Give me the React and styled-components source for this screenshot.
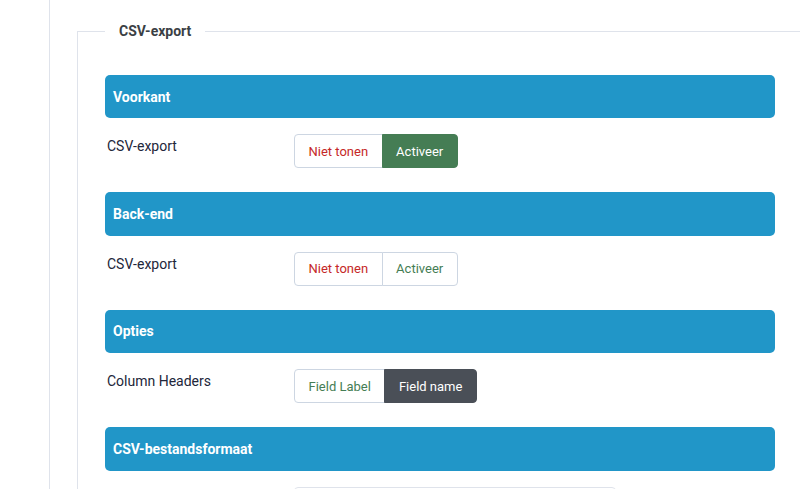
import React from 'react';
import styled, { createGlobalStyle } from 'styled-components';

const GlobalStyle = createGlobalStyle`
    html, body {
        margin: 0;
        padding: 0;
        background: #fff;
        overflow: hidden;
    }
    body {
        font-family: Roboto, "Liberation Sans", sans-serif;
        color: #22263a;
    }
`;

const Page = styled.div`
    display: flex;
    height: 489px;
    overflow: hidden;
`;

const Gutter = styled.div`
    width: 49px;
    flex-shrink: 0;
`;

const Main = styled.main`
    flex: 1;
    border-left: 1px solid #dfe3eb;
    padding: 21px 0 0 27px;
    overflow: hidden;
`;

const Fieldset = styled.fieldset`
    width: 670px;
    margin: 0;
    padding: 14px 28px 0 27px;
    border: 1px solid #dfe3eb;
    border-bottom: none;
    min-width: 0;
`;

const Legend = styled.legend`
    padding: 0 14px;
    font-size: 14px;
    line-height: 20px;
    font-weight: 700;
    color: #3b3f45;
`;

const Section = styled.section`
    margin-top: ${(p) => (p.$first ? '20px' : '24px')};
`;

const SectionHeader = styled.h3`
    margin: 0;
    height: 43.4px;
    display: flex;
    align-items: center;
    padding: 0 8px;
    background: #2196c8;
    border-radius: 5px;
    color: #fff;
    font-size: 14px;
    font-weight: 700;
`;

const Row = styled.div`
    display: flex;
    align-items: flex-start;
    margin-top: 16px;
`;

const Label = styled.label`
    width: 187px;
    padding: 2px 0 0 2px;
    flex-shrink: 0;
    font-size: 14px;
    line-height: 21px;
`;

const Group = styled.div`
    display: flex;
`;

const toggleColours = {
    red: { color: '#c52827', bg: '#fff', border: '#cdd6e2' },
    green: { color: '#457d54', bg: '#fff', border: '#cdd6e2' },
    greenOn: { color: '#fff', bg: '#457d54', border: '#457d54' },
    darkOn: { color: '#fff', bg: '#4a4f57', border: '#4a4f57' },
};

const Toggle = styled.button`
    height: 34px;
    padding: 0 13.5px;
    font-family: Roboto, "Liberation Sans", sans-serif;
    font-size: 13px;
    color: ${(p) => toggleColours[p.$tone].color};
    background: ${(p) => toggleColours[p.$tone].bg};
    border: 1px solid ${(p) => toggleColours[p.$tone].border};
    border-radius: 0;
    cursor: pointer;

    &:first-child {
        border-radius: 4px 0 0 4px;
    }
    &:last-child {
        border-radius: 0 4px 4px 0;
        margin-left: -1px;
    }
`;

const Select = styled.div`
    width: 320px;
    height: 34px;
    border: 1px solid #dfe3eb;
    border-radius: 4px;
`;

const sections = [
    { title: 'Voorkant', label: 'CSV-export', options: [['Niet tonen', 'red'], ['Activeer', 'greenOn']] },
    { title: 'Back-end', label: 'CSV-export', options: [['Niet tonen', 'red'], ['Activeer', 'green']] },
    { title: 'Opties', label: 'Column Headers', options: [['Field Label', 'green'], ['Field name', 'darkOn']] },
];

export default function App() {
    return (
        <>
            <GlobalStyle />
            <Page>
                <Gutter />
                <Main>
                    <Fieldset>
                        <Legend>CSV-export</Legend>
                        {sections.map((s, i) => (
                            <Section key={s.title} $first={i === 0}>
                                <SectionHeader>{s.title}</SectionHeader>
                                <Row>
                                    <Label>{s.label}</Label>
                                    <Group>
                                        {s.options.map(([text, tone]) => (
                                            <Toggle key={text} $tone={tone}>{text}</Toggle>
                                        ))}
                                    </Group>
                                </Row>
                            </Section>
                        ))}
                        <Section>
                            <SectionHeader>CSV-bestandsformaat</SectionHeader>
                            <Row>
                                <Label />
                                <Select />
                            </Row>
                        </Section>
                    </Fieldset>
                </Main>
            </Page>
        </>
    );
}
